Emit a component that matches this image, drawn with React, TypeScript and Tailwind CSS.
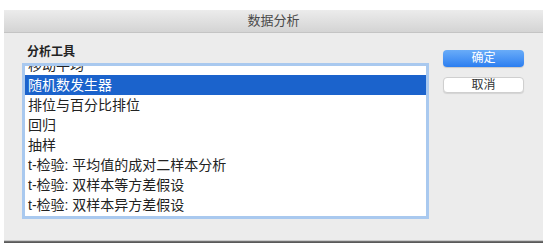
import React from 'react';

const font = { fontFamily: '"Liberation Sans", "Noto Sans CJK SC", sans-serif' };

const tools = [
  '移动平均',
  '随机数发生器',
  '排位与百分比排位',
  '回归',
  '抽样',
  't-检验: 平均值的成对二样本分析',
  't-检验: 双样本等方差假设',
  't-检验: 双样本异方差假设',
];

export default function App() {
  const selected = 1;
  return (
    <div className="w-[549px] h-[251px] bg-white pt-[10px] pl-[4px]" style={font}>
      <div className="w-[539px] flex flex-col">
        <div className="h-[23px] bg-gradient-to-b from-[#ececec] to-[#d4d4d4] border-b border-[#c4c4c4] flex items-center justify-center text-[13px] text-[#4a4a4a]">
          数据分析
        </div>
        <div className="h-[207px] bg-[#ececec] flex pl-[18px]">
          <div className="pt-[11px] flex flex-col">
            <div className="h-[16px] leading-[16px] text-[12px] font-bold text-[#222] pl-[5px]">分析工具</div>
            <div className="mt-[3px] w-[407px] h-[156px] border-[3px] border-[#a9c9ef] bg-white overflow-hidden">
              <div className="-mt-[11px]">
                {tools.map((t, i) => (
                  <div
                    key={t}
                    className={
                      'h-[20px] leading-[20px] pl-[3px] text-[14px] whitespace-nowrap ' +
                      (i === selected ? 'bg-[#1b63cc] text-white' : 'text-[#222]')
                    }
                  >
                    {t}
                  </div>
                ))}
              </div>
            </div>
          </div>
          <div className="pt-[17px] pl-[14px] flex flex-col gap-[10px]">
            <button className="w-[81px] h-[17px] rounded-[4px] bg-gradient-to-b from-[#69acf8] to-[#2b7ef0] text-white text-[12px] leading-[17px] shadow-[0_1px_1px_rgba(0,0,0,0.15)]">
              确定
            </button>
            <button className="w-[81px] h-[16px] rounded-[4px] bg-white border border-[#cfcfcf] text-[#333] text-[12px] leading-[14px] shadow-[0_1px_1px_rgba(0,0,0,0.1)]">
              取消
            </button>
          </div>
        </div>
        <div className="h-[1px] bg-[#c8c8c8]" />
        <div className="h-[2px] bg-gradient-to-b from-[#7a7a7a] to-[#4f4f4f]" />
      </div>
    </div>
  );
}
